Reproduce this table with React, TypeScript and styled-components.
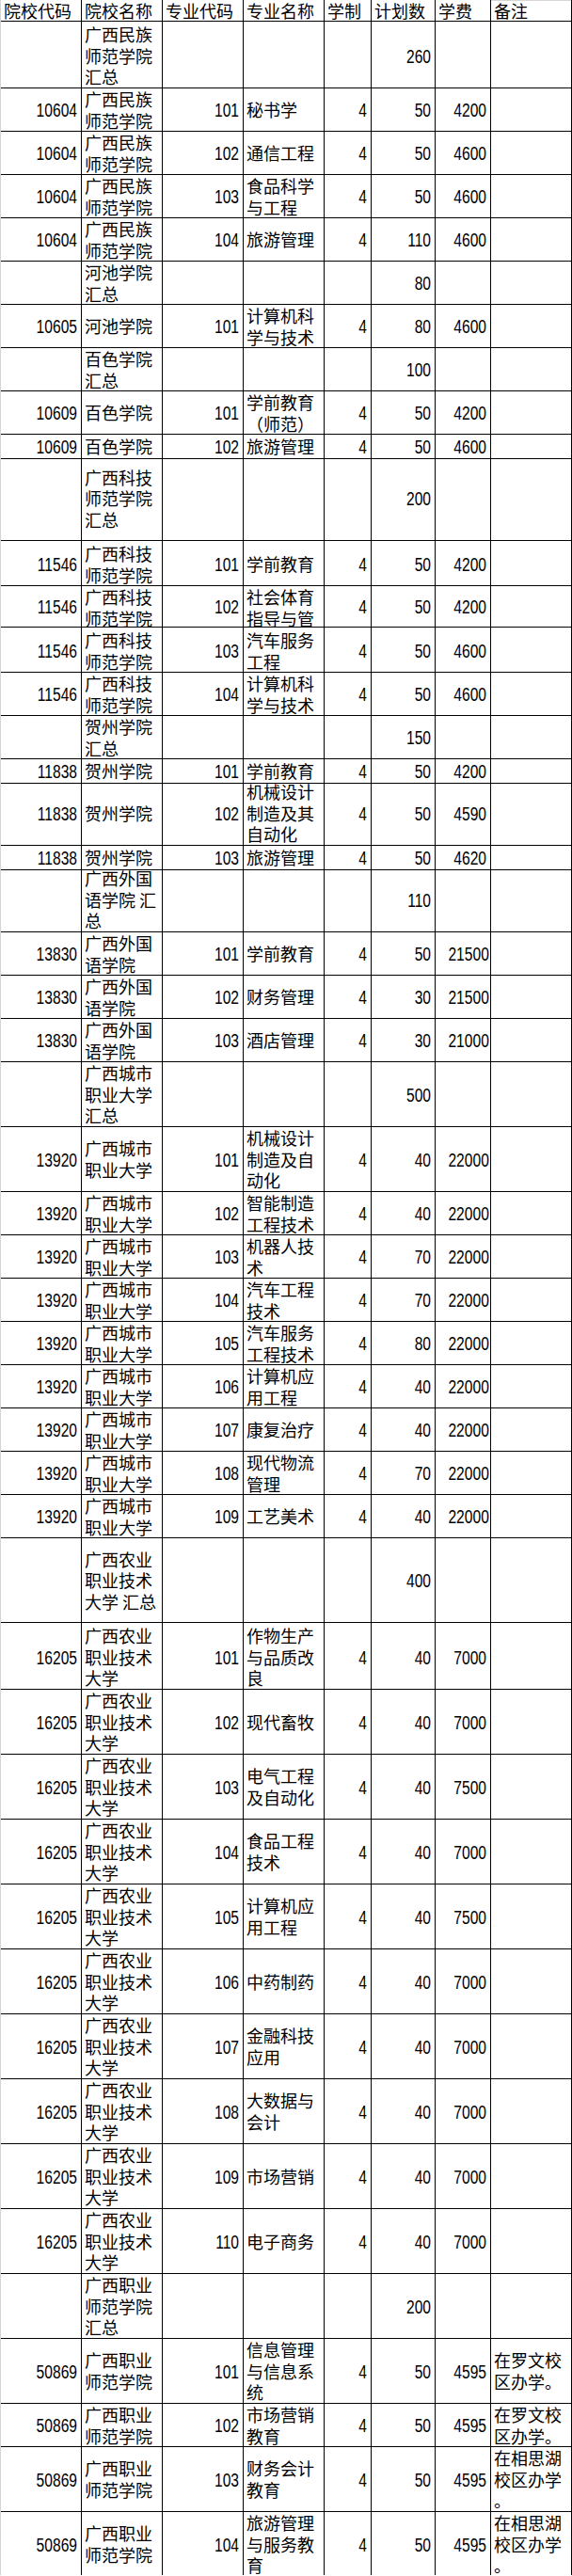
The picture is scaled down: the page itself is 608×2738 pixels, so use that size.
import React from "react";
import styled, { createGlobalStyle, css } from "styled-components";

const GlobalStyle = createGlobalStyle`
  html, body {
    margin: 0;
    padding: 0;
    background: #ffffff;
  }
  body {
    width: 608px;
  }
`;

const Sheet = styled.div`
  width: 608px;
  box-sizing: border-box;
  border-left: 1px solid #d4d4d4;
  color: #000;
  font-family: "Noto Sans CJK SC", "Noto Sans", sans-serif;
`;

const Row = styled.div<{ $units: number }>`
  display: grid;
  grid-template-columns: 86px 86px 86px 86px 50px 68px 59px 86px;
  height: ${(p) => p.$units * 23}px;
`;

const cellBase = css`
  box-sizing: border-box;
  border-right: 1px solid #000;
  border-bottom: 1px solid #000;
  display: flex;
  flex-direction: column;
  justify-content: safe center;
  min-width: 0;
`;

const TextCell = styled.div<{ $clip?: boolean }>`
  ${cellBase};
  overflow: ${(p) => (p.$clip ? "hidden" : "visible")};
  padding: 2px 2px 0 3px;
  font-size: 18px;
  line-height: 22.5px;
  text-align: left;
  word-break: break-all;
  line-break: anywhere;
`;

const NumCell = styled.div`
  ${cellBase};
  padding: 4px 4px 0 2px;
  font-family: "Liberation Sans", Arial, sans-serif;
  font-size: 20px;
  line-height: 22.5px;
  text-align: right;
  white-space: nowrap;
`;

/* the sheet's figures are a narrow face: Arial metrics squeezed to match */
const Figures = styled.span`
  display: inline-block;
  transform: scaleX(0.78);
  transform-origin: right center;
`;

const HeadCell = styled.div<{ $edge?: boolean }>`
  ${cellBase};
  justify-content: flex-start;
  padding: 1px 1px 0 3px;
  font-size: 18px;
  line-height: 21px;
  white-space: nowrap;
  ${(p) => p.$edge && css`box-shadow: inset 0 1px 0 #d6d6d6;`}
`;

type RowData = { u: number; c: string[]; clip?: boolean };

const NUMERIC = [true, false, true, false, true, true, true, false];

const HEAD = ["院校代码", "院校名称", "专业代码", "专业名称", "学制", "计划数", "学费", "备注"];

const mk = (u: number, ...c: string[]): RowData => ({ u, c });

const MZ = "广西民族师范学院";
const KJ = "广西科技师范学院";
const WG = "广西外国语学院";
const CS = "广西城市职业大学";
const NY = "广西农业职业技术大学";
const ZY = "广西职业师范学院";

const ROWS: RowData[] = [
  mk(3, "", "广西民族师范学院汇总", "", "", "", "260", "", ""),
  mk(2, "10604", MZ, "101", "秘书学", "4", "50", "4200", ""),
  mk(2, "10604", MZ, "102", "通信工程", "4", "50", "4600", ""),
  mk(2, "10604", MZ, "103", "食品科学与工程", "4", "50", "4600", ""),
  mk(2, "10604", MZ, "104", "旅游管理", "4", "110", "4600", ""),
  mk(2, "", "河池学院汇总", "", "", "", "80", "", ""),
  mk(2, "10605", "河池学院", "101", "计算机科学与技术", "4", "80", "4600", ""),
  mk(2, "", "百色学院汇总", "", "", "", "100", "", ""),
  mk(2, "10609", "百色学院", "101", "学前教育（师范）", "4", "50", "4200", ""),
  mk(1, "10609", "百色学院", "102", "旅游管理", "4", "50", "4600", ""),
  mk(4, "", "广西科技师范学院汇总", "", "", "", "200", "", ""),
  mk(2, "11546", KJ, "101", "学前教育", "4", "50", "4200", ""),
  { ...mk(2, "11546", KJ, "102", "社会体育指导与管理", "4", "50", "4200", ""), clip: true },
  mk(2, "11546", KJ, "103", "汽车服务工程", "4", "50", "4600", ""),
  mk(2, "11546", KJ, "104", "计算机科学与技术", "4", "50", "4600", ""),
  mk(2, "", "贺州学院汇总", "", "", "", "150", "", ""),
  mk(1, "11838", "贺州学院", "101", "学前教育", "4", "50", "4200", ""),
  mk(3, "11838", "贺州学院", "102", "机械设计制造及其自动化", "4", "50", "4590", ""),
  mk(1, "11838", "贺州学院", "103", "旅游管理", "4", "50", "4620", ""),
  mk(3, "", "广西外国语学院 汇总", "", "", "", "110", "", ""),
  mk(2, "13830", WG, "101", "学前教育", "4", "50", "21500", ""),
  mk(2, "13830", WG, "102", "财务管理", "4", "30", "21500", ""),
  mk(2, "13830", WG, "103", "酒店管理", "4", "30", "21000", ""),
  mk(3, "", "广西城市职业大学汇总", "", "", "", "500", "", ""),
  mk(3, "13920", CS, "101", "机械设计制造及自动化", "4", "40", "22000", ""),
  mk(2, "13920", CS, "102", "智能制造工程技术", "4", "40", "22000", ""),
  mk(2, "13920", CS, "103", "机器人技术", "4", "70", "22000", ""),
  mk(2, "13920", CS, "104", "汽车工程技术", "4", "70", "22000", ""),
  mk(2, "13920", CS, "105", "汽车服务工程技术", "4", "80", "22000", ""),
  mk(2, "13920", CS, "106", "计算机应用工程", "4", "40", "22000", ""),
  mk(2, "13920", CS, "107", "康复治疗", "4", "40", "22000", ""),
  mk(2, "13920", CS, "108", "现代物流管理", "4", "70", "22000", ""),
  mk(2, "13920", CS, "109", "工艺美术", "4", "40", "22000", ""),
  mk(4, "", "广西农业职业技术大学 汇总", "", "", "", "400", "", ""),
  mk(3, "16205", NY, "101", "作物生产与品质改良", "4", "40", "7000", ""),
  mk(3, "16205", NY, "102", "现代畜牧", "4", "40", "7000", ""),
  mk(3, "16205", NY, "103", "电气工程及自动化", "4", "40", "7500", ""),
  mk(3, "16205", NY, "104", "食品工程技术", "4", "40", "7000", ""),
  mk(3, "16205", NY, "105", "计算机应用工程", "4", "40", "7500", ""),
  mk(3, "16205", NY, "106", "中药制药", "4", "40", "7000", ""),
  mk(3, "16205", NY, "107", "金融科技应用", "4", "40", "7000", ""),
  mk(3, "16205", NY, "108", "大数据与会计", "4", "40", "7000", ""),
  mk(3, "16205", NY, "109", "市场营销", "4", "40", "7000", ""),
  mk(3, "16205", NY, "110", "电子商务", "4", "40", "7000", ""),
  mk(3, "", "广西职业师范学院汇总", "", "", "", "200", "", ""),
  mk(3, "50869", ZY, "101", "信息管理与信息系统", "4", "50", "4595", "在罗文校区办学。"),
  mk(2, "50869", ZY, "102", "市场营销教育", "4", "50", "4595", "在罗文校区办学。"),
  mk(3, "50869", ZY, "103", "财务会计教育", "4", "50", "4595", "在相思湖校区办学。"),
  mk(3, "50869", ZY, "104", "旅游管理与服务教育", "4", "50", "4595", "在相思湖校区办学。"),
];

export default function App() {
  return (
    <>
      <GlobalStyle />
      <Sheet>
        <Row $units={1}>
          {HEAD.map((h, i) => (
            <HeadCell key={h} $edge={i === HEAD.length - 1}>
              {h}
            </HeadCell>
          ))}
        </Row>
        {ROWS.map((r, ri) => (
          <Row key={ri} $units={r.u}>
            {r.c.map((v, ci) =>
              NUMERIC[ci] ? (
                <NumCell key={ci}>{v && <Figures>{v}</Figures>}</NumCell>
              ) : (
                <TextCell key={ci} $clip={r.clip}>
                  {v}
                </TextCell>
              )
            )}
          </Row>
        ))}
      </Sheet>
    </>
  );
}
